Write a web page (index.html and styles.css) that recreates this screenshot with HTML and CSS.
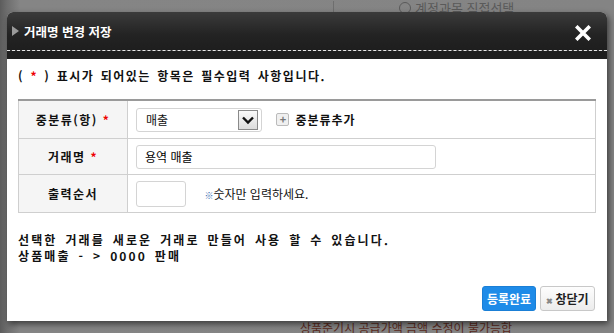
FILE: index.html
```html
<!DOCTYPE html>
<html lang="ko">
<head>
    <meta charset="UTF-8">
    <title>거래명 변경 저장</title>
    <link rel="stylesheet" href="styles.css">
</head>
<body>
    <!-- dimmed page behind the popup -->
    <div class="page-bg">
        <div class="bg-top">
            <span class="bg-radio"></span>계정과목 직접선택
        </div>
        <div class="bg-bottom">상품준기시 공급가액 금액 수정이 불가능합</div>
    </div>

    <div class="popup">
        <div class="popup-head">
            <h2><span class="tri"></span>거래명 변경 저장</h2>
            <svg class="close" width="16" height="16" viewBox="0 0 16 16"><path d="M2.5 2.5 L13.5 13.5 M13.5 2.5 L2.5 13.5" stroke="#fff" stroke-width="3.6" stroke-linecap="square"/></svg>
        </div>
        <div class="popup-body">
            <p class="notice">( <em>*</em> ) 표시가 되어있는 항목은 필수입력 사항입니다.</p>

            <table class="form-table">
                <tr>
                    <th>중분류(항) <em>*</em></th>
                    <td>
                        <div class="select-box">
                            <span>매출</span>
                            <span class="arrow">
                                <svg width="16" height="16" viewBox="0 0 16 16"><path d="M3 5.5 L8 10.5 L13 5.5" fill="none" stroke="#111" stroke-width="2.4"/></svg>
                            </span>
                        </div>
                        <span class="add-link"><span class="plus">+</span>중분류추가</span>
                    </td>
                </tr>
                <tr>
                    <th>거래명 <em>*</em></th>
                    <td><input class="txt wide" type="text" value="용역 매출"></td>
                </tr>
                <tr>
                    <th>출력순서</th>
                    <td>
                        <input class="txt small" type="text" value="">
                        <span class="hint"><span class="mark">※</span>숫자만 입력하세요.</span>
                    </td>
                </tr>
            </table>

            <p class="desc">선택한 거래를 새로운 거래로 만들어 사용 할 수 있습니다.<br>상품매출 - &gt; 0000 판매</p>

            <div class="btn-row">
                <button class="btn-ok">등록완료</button>
                <button class="btn-close"><span class="x">&#10006;</span>창닫기</button>
            </div>
        </div>
    </div>
</body>
</html>
```

FILE: styles.css
```css
body {
    margin: 0;
    font-family: "Noto Sans CJK KR", "Noto Sans", sans-serif;
    font-size: 12px;
    color: #111;
    background-color: #7b7b7b;
    width: 614px;
    height: 333px;
    overflow: hidden;
    position: relative;
}

.page-bg {
    height: 333px;
    background: linear-gradient(to right, #5c5c5c 0, #6e6e6e 7px, #858585 20px, #848484 100%);
}

.bg-top {
    position: absolute;
    top: 1px;
    left: 333px;
    color: #5a5a5a;
    font-size: 13px;
    line-height: 14px;
    border-left: 1px solid #6e6e6e;
    padding-left: 65px;
    height: 12px;
    overflow: hidden;
}

.bg-radio {
    display: inline-block;
    width: 10px;
    height: 10px;
    border: 1px solid #5a5a5a;
    border-radius: 50%;
    margin-right: 4px;
    vertical-align: -1px;
}

.bg-bottom {
    position: absolute;
    top: 322px;
    left: 300px;
    color: #5a2a20;
    font-size: 12px;
    line-height: 11px;
    white-space: nowrap;
    overflow: hidden;
    height: 11px;
}

/* popup */
.popup {
    position: absolute;
    top: 12px;
    left: 7px;
    width: 600px;
    height: 309px;
    background-color: #fff;
    border-radius: 6px 6px 0 0;
    box-shadow: 2px 3px 6px rgba(0,0,0,0.55);
    display: flex;
    flex-direction: column;
}

.popup-head {
    height: 38px;
    background: linear-gradient(#3b3b3b, #232323 60%, #1e1e1e);
    border-radius: 6px 6px 0 0;
    border-bottom: 1px dashed #e8e8e8;
    display: flex;
    align-items: center;
    justify-content: space-between;
    padding: 0 16px 0 5px;
    position: relative;
}

.popup-head::after {
    content: "";
    position: absolute;
    left: 0;
    right: 0;
    top: 39px;
    height: 8px;
    background-color: #1e1e1e;
}

.popup-head h2 {
    margin: 0;
    color: #fff;
    font-size: 12.5px;
    font-weight: bold;
    display: flex;
    align-items: center;
}

.tri {
    display: inline-block;
    width: 0;
    height: 0;
    border-top: 5px solid transparent;
    border-bottom: 5px solid transparent;
    border-left: 7px solid #9a9a9a;
    margin-right: 5px;
}

.close {
    margin-top: 4px;
}

.popup-body {
    margin-top: 8px;
    padding: 0 11px;
}

.notice {
    margin: 10px 0 0;
    font-weight: bold;
    font-size: 12px;
    line-height: 14px;
    letter-spacing: 1.5px;
    word-spacing: 1.5px;
}

em {
    color: #e00;
    font-style: normal;
    font-weight: bold;
}

.form-table {
    margin-top: 16px;
    width: 578px;
    border-collapse: collapse;
    border-top: 2px solid #9a9a9a;
}

.form-table th,
.form-table td {
    border-bottom: 1px solid #cfcfcf;
    border-left: 1px solid #cfcfcf;
    border-right: 1px solid #cfcfcf;
}

.form-table th {
    width: 108px;
    background-color: #f5f5f5;
    font-size: 12px;
    font-weight: bold;
    letter-spacing: 1.5px;
    text-align: center;
    padding: 0;
}

.form-table tr:first-child th,
.form-table tr:first-child td {
    height: 37px;
}

.form-table tr:nth-child(2) th,
.form-table tr:nth-child(2) td {
    height: 35px;
}

.form-table tr:nth-child(3) th,
.form-table tr:nth-child(3) td {
    height: 37px;
}

.form-table td {
    padding: 0 0 0 8px;
}

.select-box {
    display: inline-flex;
    align-items: center;
    justify-content: space-between;
    width: 112px;
    height: 22px;
    border: 1px solid #d4d4d4;
    border-radius: 3px;
    padding: 0 3px 0 9px;
    vertical-align: middle;
}

.arrow {
    width: 18px;
    height: 18px;
    border: 1px solid #8a8a8a;
    background: linear-gradient(#fafafa, #dcdcdc);
    display: flex;
    align-items: center;
    justify-content: center;
}

.add-link {
    display: inline-flex;
    align-items: center;
    margin-left: 11px;
    font-weight: bold;
    letter-spacing: 1px;
    vertical-align: middle;
}

.plus {
    display: inline-block;
    width: 11px;
    height: 11px;
    border: 1px solid #bbb;
    border-radius: 2px;
    background-color: #f0f0f0;
    color: #777;
    font-size: 11px;
    line-height: 11px;
    letter-spacing: 0;
    text-align: center;
    margin-right: 6px;
}

.txt {
    height: 24px;
    box-sizing: border-box;
    border: 1px solid #d4d4d4;
    border-radius: 3px;
    padding: 0 8px;
    font-family: inherit;
    font-size: 12px;
    vertical-align: middle;
}

.wide {
    width: 300px;
}

.small {
    width: 50px;
    height: 26px;
}

.hint {
    margin-left: 15px;
    font-size: 12px;
    vertical-align: middle;
}

.mark {
    color: #3a6db0;
    font-size: 9px;
}

.desc {
    margin: 19px 0 0;
    font-weight: bold;
    font-size: 12px;
    line-height: 16px;
    letter-spacing: 2.1px;
    word-spacing: 2.5px;
}

.btn-row {
    display: flex;
    justify-content: flex-end;
    gap: 4px;
    margin-top: 22px;
    padding-right: 1px;
}

.btn-row button {
    height: 25px;
    border-radius: 3px;
    font-family: inherit;
    font-size: 12px;
    font-weight: bold;
    padding: 0;
    white-space: nowrap;
    cursor: pointer;
}

.btn-ok {
    background-color: #1e8be8;
    color: #fff;
    border: 1px solid #1a7fd6;
    width: 54px;
}

.btn-close {
    background: linear-gradient(#fdfdfd, #ececec);
    color: #222;
    border: 1px solid #c8c8c8;
    width: 55px;
}

.btn-close .x {
    color: #888;
    font-size: 8px;
    margin-right: 2px;
}
```
